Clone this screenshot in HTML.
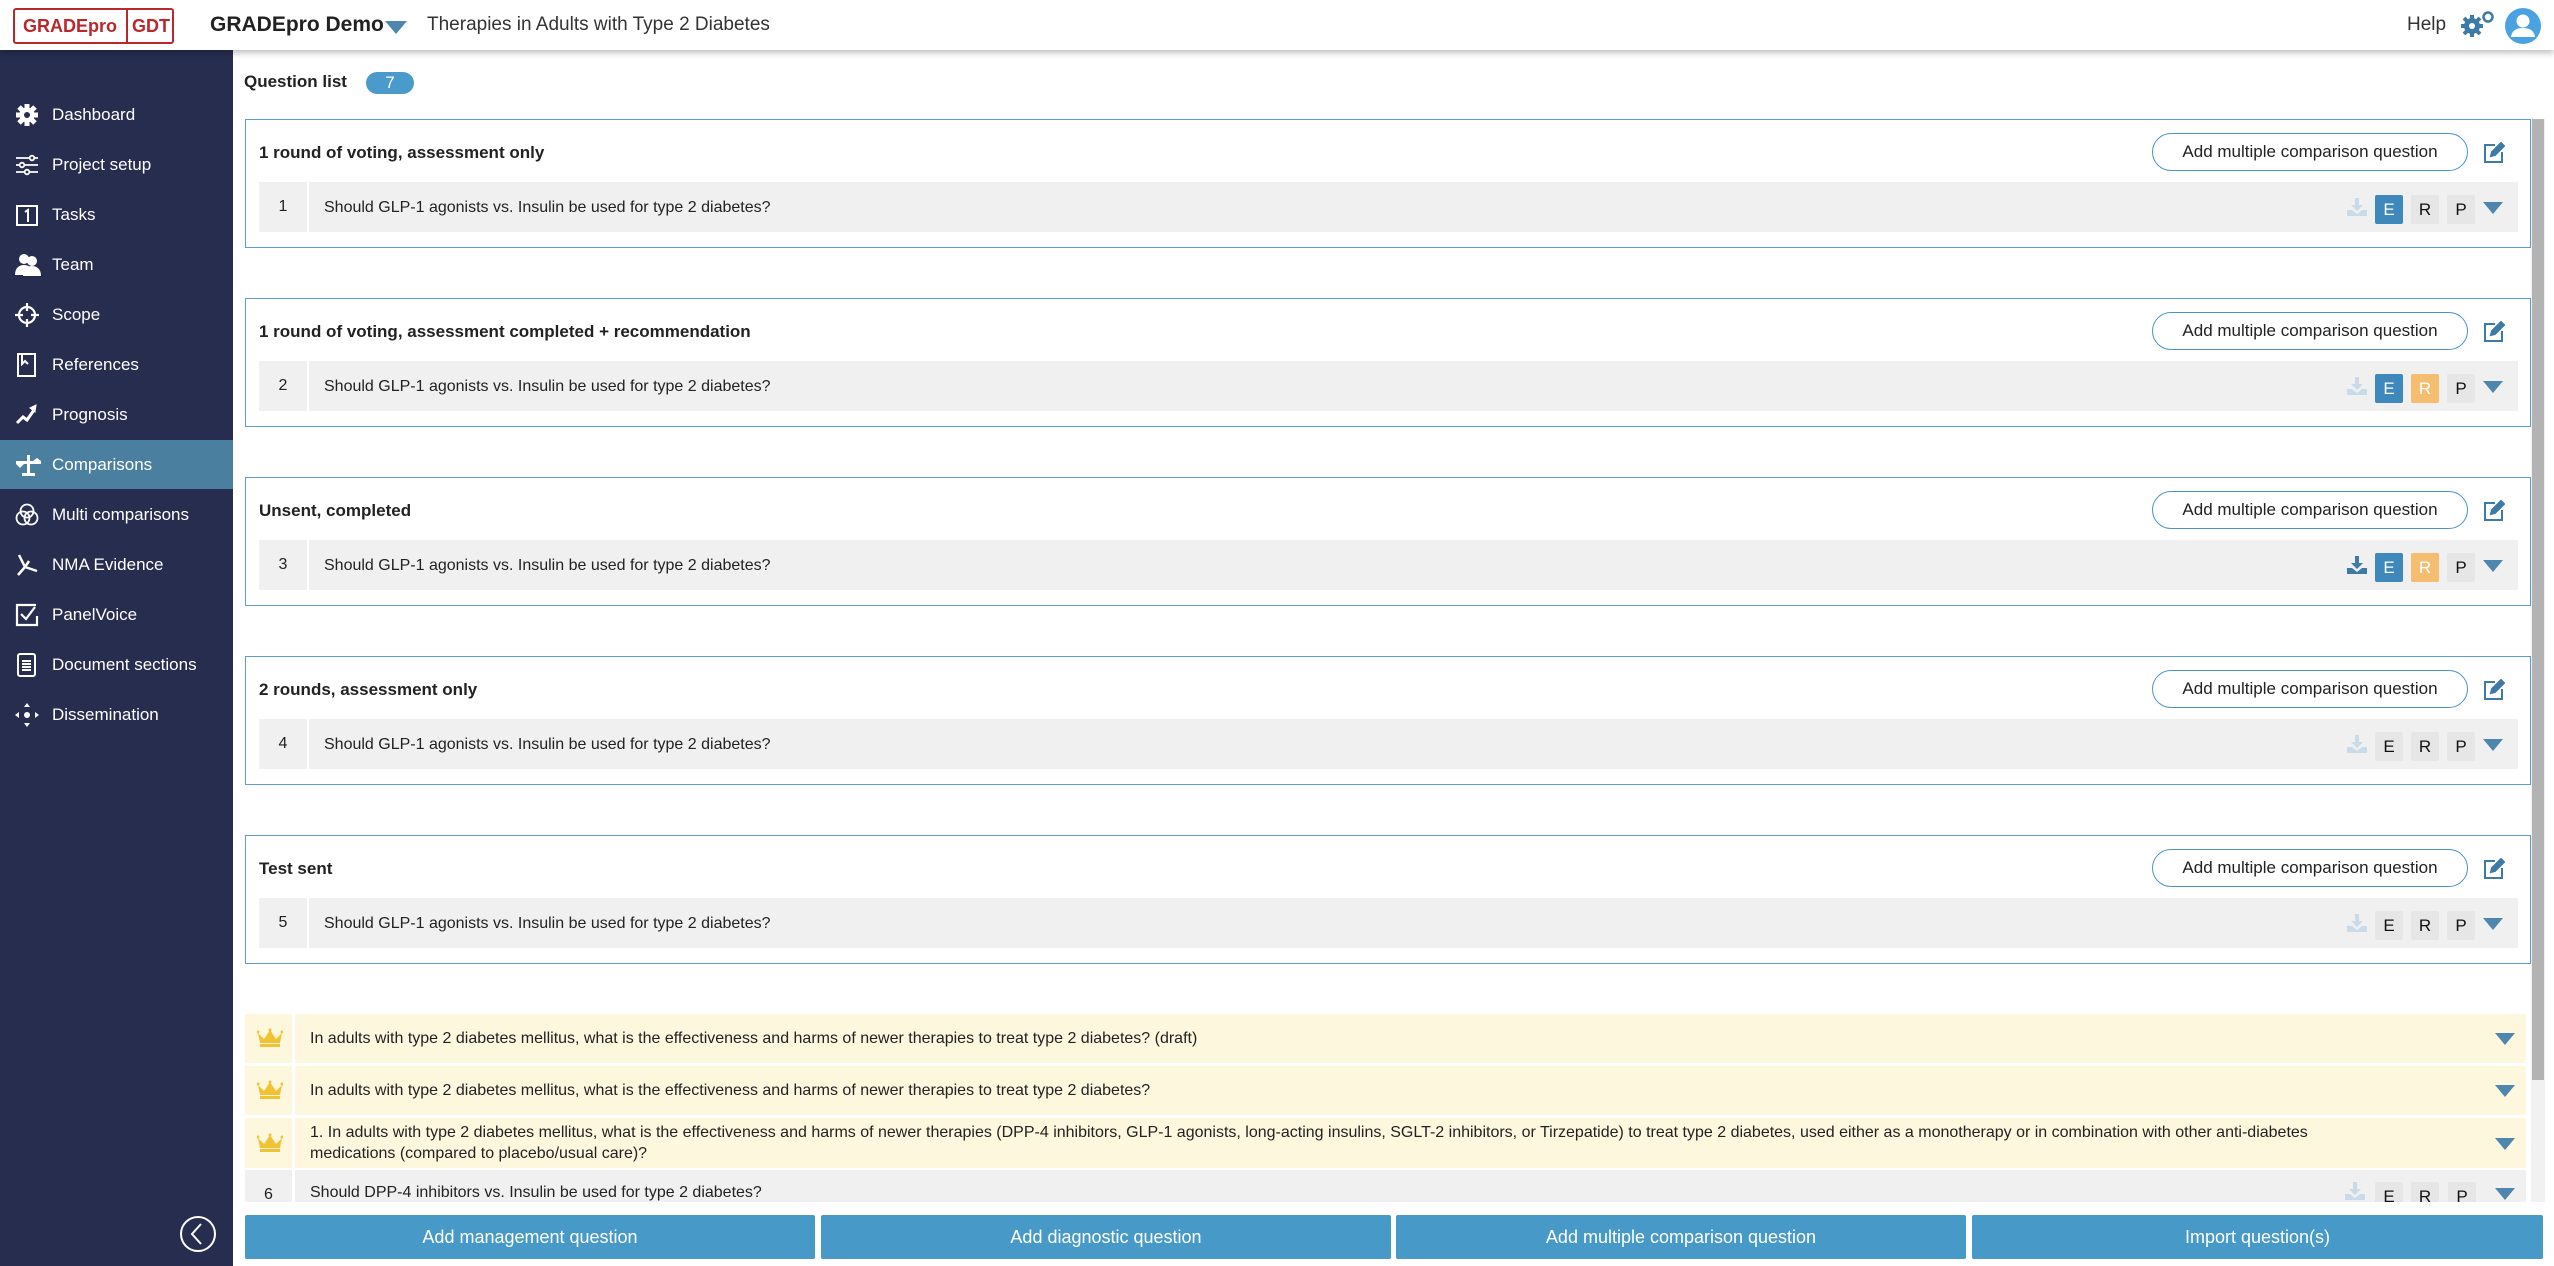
<!DOCTYPE html>
<html><head><meta charset="utf-8"><style>
*{box-sizing:border-box;margin:0;padding:0}
body{width:2554px;height:1266px;position:relative;overflow:hidden;background:#fff;font-family:"Liberation Sans",sans-serif;color:#222}
.abs{position:absolute}
#hdr{left:0;top:0;width:2554px;height:50px;background:#fff;box-shadow:0 3px 6px rgba(0,0,0,.25);z-index:5}
#side{left:0;top:50px;width:233px;height:1216px;background:#272d4f}
.nav{position:absolute;left:0;width:233px;height:49px;color:#fff;font-size:17px;line-height:49px;padding-left:52px}
.nav svg{position:absolute;left:15px;top:13px}
.grp{position:absolute;left:245px;width:2286px;height:129px;border:1px solid #5b9ec9;background:#fff}
.gt{position:absolute;left:13px;top:23px;font-weight:bold;font-size:17px}
.pill{position:absolute;left:1906px;top:13px;width:316px;height:38px;border:1.5px solid #4a94c6;border-radius:19px;font-size:17px;text-align:center;line-height:35px;color:#222}
.edit{position:absolute;left:2237px;top:22px}
.row{position:absolute;left:13px;top:62px;width:2259px;height:50px;background:#f0f0f0}
.num{position:absolute;left:0;top:0;width:50px;height:50px;line-height:50px;text-align:center;font-size:16px;border-right:2px solid #fff}
.qt{position:absolute;left:65px;top:2px;line-height:48px;font-size:16px}
.b{position:absolute;top:13px;width:28px;height:29px;line-height:29px;text-align:center;font-size:17px;border-radius:2px;background:#e6e6e6;color:#111}
.bE{left:2116px}.bR{left:2152px}.bP{left:2188px}
.blue{background:#3f88bb;color:#fff}.org{background:#f4bd6f;color:#fff}
.tri{position:absolute;left:2224px;top:20px;width:0;height:0;border-left:10px solid transparent;border-right:10px solid transparent;border-top:12px solid #4f86ad}
.dl{position:absolute;left:2088px;top:16px}
.yr{position:absolute;left:245px;width:2281px;background:#fdf7de}
.yr .c{position:absolute;left:0;top:0;width:50px;height:100%;border-right:3px solid #fff}
.yr .t{position:absolute;left:65px;font-size:16px;line-height:21px}
.yr .tri{left:2250px}
.btn{position:absolute;top:1215px;height:44px;background:#4799c7;color:#fff;font-size:18px;text-align:center;line-height:44px;border-radius:2px}
</style></head><body>
<div id="hdr" class="abs">
 <div class="abs" style="left:13px;top:8px;width:161px;height:36px;border:2px solid #b8282c;border-radius:3px;color:#b8282c;font-weight:bold;font-size:18px;line-height:32px">
  <span class="abs" style="left:8px">GRADEpro</span><span class="abs" style="left:111px;top:0;height:32px;border-left:2px solid #b8282c"></span><span class="abs" style="left:117px">GDT</span></div>
 <div class="abs" style="left:210px;top:13px;font-size:21px;font-weight:bold;color:#222">GRADEpro Demo</div>
 <div class="abs" style="left:385px;top:21px;border-left:11px solid transparent;border-right:11px solid transparent;border-top:13px solid #4f86ad"></div>
 <div class="abs" style="left:427px;top:14px;font-size:19px;color:#333">Therapies in Adults with Type 2 Diabetes</div>
 <div class="abs" style="left:2407px;top:14px;font-size:19px;color:#333">Help</div>
 <svg class="abs" style="left:2460px;top:10px" width="36" height="28" viewBox="0 0 36 28"><g fill="#3e7aa6"><circle cx="12" cy="16" r="8"/><g stroke="#3e7aa6" stroke-width="4"><line x1="12" y1="5" x2="12" y2="27"/><line x1="1" y1="16" x2="23" y2="16"/><line x1="4" y1="8" x2="20" y2="24"/><line x1="20" y1="8" x2="4" y2="24"/></g><circle cx="12" cy="16" r="3" fill="#fff"/><circle cx="28" cy="7" r="4.5" fill="none" stroke="#3e7aa6" stroke-width="2.5"/></g></svg>
 <svg class="abs" style="left:2505px;top:8px" width="36" height="36" viewBox="0 0 36 36"><circle cx="18" cy="18" r="18" fill="#4aa3e0"/><circle cx="18" cy="13" r="6.5" fill="#fff"/><path d="M6 29c1-7 6-9 12-9s11 2 12 9z" fill="#fff"/></svg>
</div>
<div id="side" class="abs">
 <div class="nav" style="top:40px"><svg width="24" height="24" viewBox="0 0 24 24"><g fill="#fff"><circle cx="12" cy="12" r="7.5"/><g stroke="#fff" stroke-width="5"><line x1="12" y1="1" x2="12" y2="23"/><line x1="1" y1="12" x2="23" y2="12"/><line x1="4" y1="4" x2="20" y2="20"/><line x1="20" y1="4" x2="4" y2="20"/></g></g><circle cx="12" cy="12" r="3" fill="#272d4f"/></svg>Dashboard</div>
 <div class="nav" style="top:90px"><svg width="24" height="24" viewBox="0 0 24 24" fill="none" stroke="#fff" stroke-width="1.8"><path d="M1 5h22M1 12h22M1 19h22"/><circle cx="17" cy="5" r="2.3" fill="#272d4f"/><circle cx="7" cy="12" r="2.3" fill="#272d4f"/><circle cx="12" cy="19" r="2.3" fill="#272d4f"/></svg>Project setup</div>
 <div class="nav" style="top:140px"><svg width="24" height="24" viewBox="0 0 24 24" fill="none" stroke="#fff" stroke-width="2"><rect x="2" y="3" width="20" height="19"/><path d="M10 9l3-2v12"/></svg>Tasks</div>
 <div class="nav" style="top:190px"><svg width="26" height="24" viewBox="0 0 26 24" fill="#fff"><circle cx="9" cy="6" r="5"/><path d="M0 22c0-7 4-10 9-10s9 3 9 10z"/><circle cx="17" cy="8" r="5"/><path d="M8 23c0-7 4-10 9-10s9 3 9 10z"/></svg>Team</div>
 <div class="nav" style="top:240px"><svg width="24" height="24" viewBox="0 0 24 24" fill="none" stroke="#fff" stroke-width="2.2"><circle cx="12" cy="12" r="8"/><path d="M12 0v8M12 16v8M0 12h8M16 12h8"/></svg>Scope</div>
 <div class="nav" style="top:290px"><svg width="24" height="24" viewBox="0 0 24 24" fill="none" stroke="#fff" stroke-width="2"><rect x="3" y="1" width="17" height="22"/><path d="M7 1v10l3-3 3 3"/></svg>References</div>
 <div class="nav" style="top:340px"><svg width="24" height="24" viewBox="0 0 24 24" fill="none" stroke="#fff" stroke-width="3"><path d="M2 20l6-6 4 3 7-10"/><path d="M15 5l6-3-1 7z" fill="#fff" stroke-width="1"/></svg>Prognosis</div>
 <div class="nav" style="top:390px;background:#4a7fa0"><svg width="28" height="24" viewBox="0 0 28 24" fill="#fff"><rect x="12" y="2" width="3" height="20"/><rect x="7" y="20" width="13" height="3"/><path d="M1 8h25v3H1z"/><path d="M1 11h8l-4 4z"/><path d="M18 8h8l-4-3z"/></svg>Comparisons</div>
 <div class="nav" style="top:440px"><svg width="24" height="24" viewBox="0 0 24 24" fill="none" stroke="#fff" stroke-width="1.8"><circle cx="12" cy="8" r="6.5"/><circle cx="8" cy="15" r="6.5"/><circle cx="16" cy="15" r="6.5"/></svg>Multi comparisons</div>
 <div class="nav" style="top:490px"><svg width="24" height="24" viewBox="0 0 24 24" fill="none" stroke="#fff" stroke-width="2.5"><path d="M4 2l6 12M10 14l-7 8M10 14l12 4M10 14l4-6"/></svg>NMA Evidence</div>
 <div class="nav" style="top:540px"><svg width="24" height="24" viewBox="0 0 24 24" fill="none" stroke="#fff" stroke-width="2.2"><path d="M21 2H2v20h20v-9"/><path d="M6 11l5 5 9-12"/></svg>PanelVoice</div>
 <div class="nav" style="top:590px"><svg width="24" height="24" viewBox="0 0 24 24" fill="none" stroke="#fff" stroke-width="2"><rect x="3" y="1" width="17" height="22" rx="2"/><path d="M7 8h9M7 11h9M7 14h9M7 17h9"/></svg>Document sections</div>
 <div class="nav" style="top:640px"><svg width="24" height="24" viewBox="0 0 24 24" fill="#fff"><circle cx="12" cy="12" r="3"/><path d="M12 0l3 4H9zM12 24l3-4H9zM0 12l4 3V9zM24 12l-4 3V9z"/></svg>Dissemination</div>
 <svg class="abs" style="left:179px;top:1165px" width="38" height="38" viewBox="0 0 38 38" fill="none" stroke="#fff" stroke-width="2"><circle cx="19" cy="19" r="17"/><path d="M22 9l-9 10 9 10"/></svg>
</div>

<div class="abs" style="left:244px;top:72px;font-size:17px;font-weight:bold">Question list</div>
<div class="abs" style="left:366px;top:72px;width:48px;height:22px;border-radius:11px;background:#4a9acb;color:#fff;text-align:center;font-size:17px;line-height:22px">7</div>

<div class="grp" style="top:119px"><div class="gt">1 round of voting, assessment only</div><div class="pill">Add multiple comparison question</div>
<svg class="edit" width="22" height="22" viewBox="0 0 22 22" fill="none" stroke="#3e7aa6" stroke-width="2"><path d="M12 3H2v17h17V10"/><path d="M8 14l1-4 9-9 3 3-9 9z" fill="#3e7aa6"/></svg>
<div class="row"><div class="num">1</div><div class="qt">Should GLP-1 agonists vs. Insulin be used for type 2 diabetes?</div>
<svg class="dl" width="20" height="18" viewBox="0 0 20 18" fill="#c9dbe8"><path d="M8 0h4v7h4l-6 6-6-6h4z"/><path d="M0 12h5l5 4 5-4h5v6H0z"/></svg>
<div class="b bE blue">E</div><div class="b bR">R</div><div class="b bP">P</div><div class="tri"></div></div></div>

<div class="grp" style="top:298px"><div class="gt">1 round of voting, assessment completed + recommendation</div><div class="pill">Add multiple comparison question</div>
<svg class="edit" width="22" height="22" viewBox="0 0 22 22" fill="none" stroke="#3e7aa6" stroke-width="2"><path d="M12 3H2v17h17V10"/><path d="M8 14l1-4 9-9 3 3-9 9z" fill="#3e7aa6"/></svg>
<div class="row"><div class="num">2</div><div class="qt">Should GLP-1 agonists vs. Insulin be used for type 2 diabetes?</div>
<svg class="dl" width="20" height="18" viewBox="0 0 20 18" fill="#c9dbe8"><path d="M8 0h4v7h4l-6 6-6-6h4z"/><path d="M0 12h5l5 4 5-4h5v6H0z"/></svg>
<div class="b bE blue">E</div><div class="b bR org">R</div><div class="b bP">P</div><div class="tri"></div></div></div>

<div class="grp" style="top:477px"><div class="gt">Unsent, completed</div><div class="pill">Add multiple comparison question</div>
<svg class="edit" width="22" height="22" viewBox="0 0 22 22" fill="none" stroke="#3e7aa6" stroke-width="2"><path d="M12 3H2v17h17V10"/><path d="M8 14l1-4 9-9 3 3-9 9z" fill="#3e7aa6"/></svg>
<div class="row"><div class="num">3</div><div class="qt">Should GLP-1 agonists vs. Insulin be used for type 2 diabetes?</div>
<svg class="dl" width="20" height="18" viewBox="0 0 20 18" fill="#3e7aa6"><path d="M8 0h4v7h4l-6 6-6-6h4z"/><path d="M0 12h5l5 4 5-4h5v6H0z"/></svg>
<div class="b bE blue">E</div><div class="b bR org">R</div><div class="b bP">P</div><div class="tri"></div></div></div>

<div class="grp" style="top:656px"><div class="gt">2 rounds, assessment only</div><div class="pill">Add multiple comparison question</div>
<svg class="edit" width="22" height="22" viewBox="0 0 22 22" fill="none" stroke="#3e7aa6" stroke-width="2"><path d="M12 3H2v17h17V10"/><path d="M8 14l1-4 9-9 3 3-9 9z" fill="#3e7aa6"/></svg>
<div class="row"><div class="num">4</div><div class="qt">Should GLP-1 agonists vs. Insulin be used for type 2 diabetes?</div>
<svg class="dl" width="20" height="18" viewBox="0 0 20 18" fill="#c9dbe8"><path d="M8 0h4v7h4l-6 6-6-6h4z"/><path d="M0 12h5l5 4 5-4h5v6H0z"/></svg>
<div class="b bE">E</div><div class="b bR">R</div><div class="b bP">P</div><div class="tri"></div></div></div>

<div class="grp" style="top:835px"><div class="gt">Test sent</div><div class="pill">Add multiple comparison question</div>
<svg class="edit" width="22" height="22" viewBox="0 0 22 22" fill="none" stroke="#3e7aa6" stroke-width="2"><path d="M12 3H2v17h17V10"/><path d="M8 14l1-4 9-9 3 3-9 9z" fill="#3e7aa6"/></svg>
<div class="row"><div class="num">5</div><div class="qt">Should GLP-1 agonists vs. Insulin be used for type 2 diabetes?</div>
<svg class="dl" width="20" height="18" viewBox="0 0 20 18" fill="#c9dbe8"><path d="M8 0h4v7h4l-6 6-6-6h4z"/><path d="M0 12h5l5 4 5-4h5v6H0z"/></svg>
<div class="b bE">E</div><div class="b bR">R</div><div class="b bP">P</div><div class="tri"></div></div></div>

<div class="yr" style="top:1014px;height:49px"><div class="c"><svg style="position:absolute;left:12px;top:14px" width="26" height="20" viewBox="0 0 26 20" fill="#f1c232"><path d="M1 5l6 6 6-9 6 9 6-6-2 10H3z"/><rect x="3" y="16" width="20" height="3"/><circle cx="13" cy="2" r="1.5"/><circle cx="1" cy="4" r="1.5"/><circle cx="25" cy="4" r="1.5"/></svg></div><div class="t" style="top:14px">In adults with type 2 diabetes mellitus, what is the effectiveness and harms of newer therapies to treat type 2 diabetes? (draft)</div><div class="tri" style="top:19px"></div></div>
<div class="yr" style="top:1066px;height:49px"><div class="c"><svg style="position:absolute;left:12px;top:14px" width="26" height="20" viewBox="0 0 26 20" fill="#f1c232"><path d="M1 5l6 6 6-9 6 9 6-6-2 10H3z"/><rect x="3" y="16" width="20" height="3"/><circle cx="13" cy="2" r="1.5"/><circle cx="1" cy="4" r="1.5"/><circle cx="25" cy="4" r="1.5"/></svg></div><div class="t" style="top:14px">In adults with type 2 diabetes mellitus, what is the effectiveness and harms of newer therapies to treat type 2 diabetes?</div><div class="tri" style="top:19px"></div></div>
<div class="yr" style="top:1118px;height:50px"><div class="c"><svg style="position:absolute;left:12px;top:15px" width="26" height="20" viewBox="0 0 26 20" fill="#f1c232"><path d="M1 5l6 6 6-9 6 9 6-6-2 10H3z"/><rect x="3" y="16" width="20" height="3"/><circle cx="13" cy="2" r="1.5"/><circle cx="1" cy="4" r="1.5"/><circle cx="25" cy="4" r="1.5"/></svg></div><div class="t" style="top:4px;white-space:nowrap">1. In adults with type 2 diabetes mellitus, what is the effectiveness and harms of newer therapies (DPP-4 inhibitors, GLP-1 agonists, long-acting insulins, SGLT-2 inhibitors, or Tirzepatide) to treat type 2 diabetes, used either as a monotherapy or in combination with other anti-diabetes<br>medications (compared to placebo/usual care)?</div><div class="tri" style="top:20px"></div></div>
<div class="abs" style="left:245px;top:1170px;width:2281px;height:32px;background:#f0f0f0;overflow:hidden">
 <div style="position:absolute;left:0;top:0;width:50px;height:50px;border-right:3px solid #fff;text-align:center;line-height:50px;font-size:16px">6</div>
 <div style="position:absolute;left:65px;top:14px;font-size:16px">Should DPP-4 inhibitors vs. Insulin be used for type 2 diabetes?</div>
 <svg style="position:absolute;left:2100px;top:12px" width="20" height="18" viewBox="0 0 20 18" fill="#c9dbe8"><path d="M8 0h4v7h4l-6 6-6-6h4z"/><path d="M0 12h5l5 4 5-4h5v6H0z"/></svg>
 <div class="b" style="left:2130px;top:12px">E</div><div class="b" style="left:2166px;top:12px">R</div><div class="b" style="left:2203px;top:12px">P</div>
 <div class="tri" style="left:2250px;top:18px"></div>
</div>

<div class="abs" style="left:2531px;top:119px;width:14px;height:1083px;background:#f1f1f1"></div>
<div class="abs" style="left:2532px;top:119px;width:12px;height:961px;background:#b3b3b3"></div>

<div class="btn" style="left:245px;width:570px">Add management question</div>
<div class="btn" style="left:821px;width:570px">Add diagnostic question</div>
<div class="btn" style="left:1396px;width:570px">Add multiple comparison question</div>
<div class="btn" style="left:1972px;width:571px">Import question(s)</div>
</body></html>
